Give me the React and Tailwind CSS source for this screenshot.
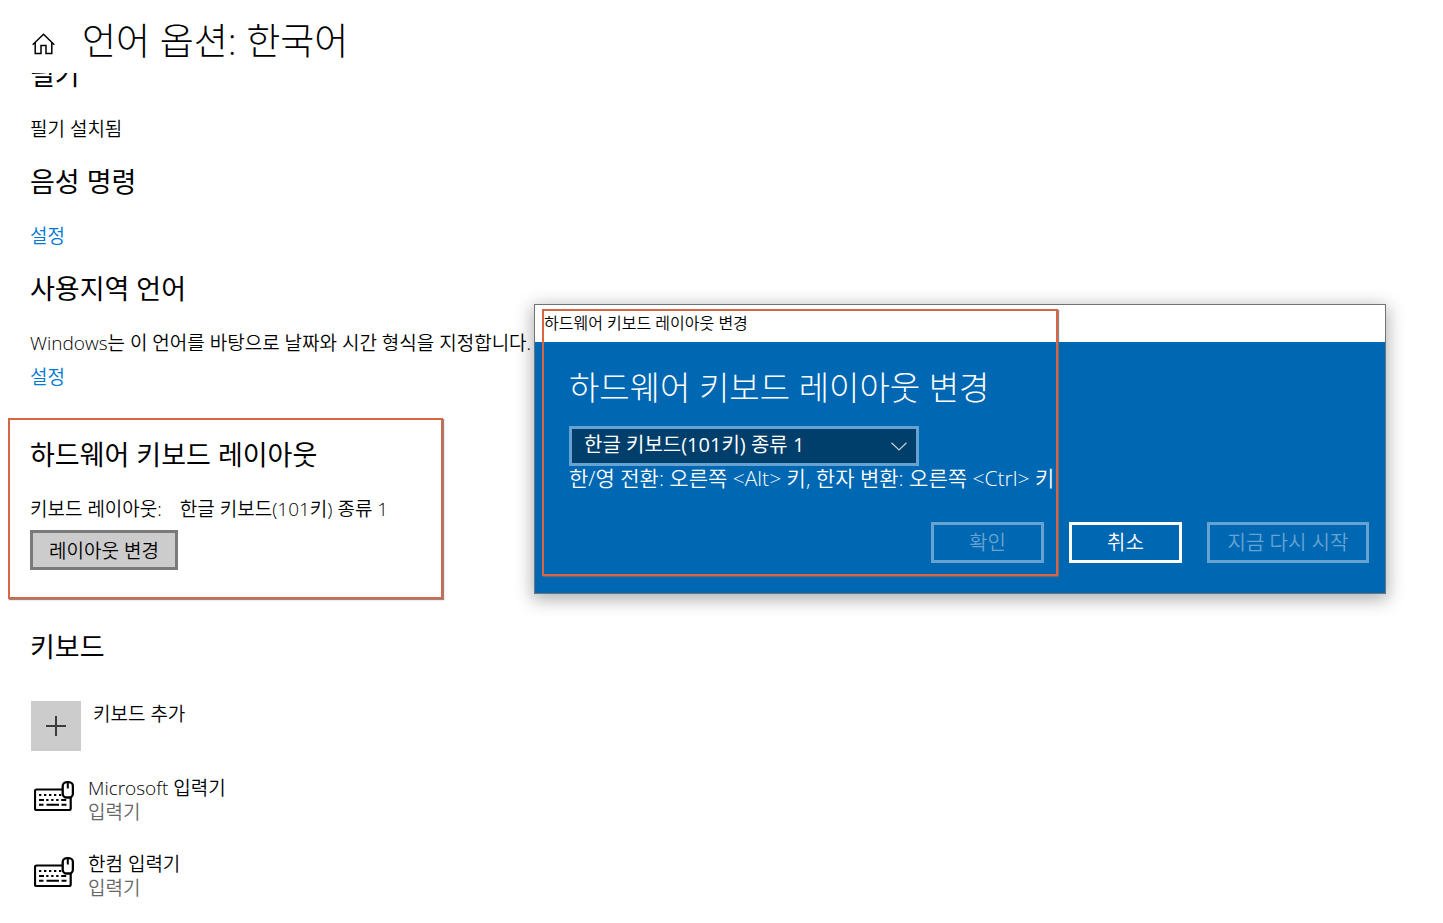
import React from "react";

const HomeIcon = () => (
  <svg width="24" height="22" viewBox="0 0 24 22" fill="none" stroke="black" strokeWidth="1.5" aria-hidden="true">
    <path d="M0.7 11.8 L11.5 1.2 L22.3 11.8" />
    <path d="M3.2 9.5 V20.6 H9 V12.5 H14 V20.6 H19.8 V9.5" />
  </svg>
);

const PlusIcon = () => (
  <svg width="20" height="20" viewBox="0 0 20 20" stroke="#3c3c3c" strokeWidth="2" aria-hidden="true">
    <path d="M10 0 V20 M0 10 H20" />
  </svg>
);

const ChevronIcon = () => (
  <svg
    className="pointer-events-none absolute right-3 top-4"
    width="16"
    height="9"
    viewBox="0 0 16 9"
    fill="none"
    stroke="#c3d3de"
    strokeWidth="1.2"
    aria-hidden="true"
  >
    <path d="M0.5 0.7 L8 8 L15.5 0.7" />
  </svg>
);

const KeyboardIcon = () => (
  <svg
    className="mt-[5px]"
    width="40"
    height="30"
    viewBox="0 0 40 30"
    fill="none"
    stroke="black"
    strokeWidth="2"
    aria-hidden="true"
  >
    <rect x="1" y="8.5" width="35.7" height="20.5" rx="1.5" strokeWidth="2.2" />
    <path d="M5 14 h2.3 M10 14 h2.3 M15 14 h2.3 M20 14 h2.3 M25 14 h2.3" />
    <path d="M5 19 h5 M12.2 19 h2.3 M17.2 19 h2.3 M22.2 19 h2.3 M27.2 19 h5" />
    <path d="M5 23.8 h4.5 M12.5 23.8 h12.5 M27.5 23.8 h5" />
    <rect x="28.7" y="1.2" width="10.2" height="15.3" rx="4" fill="white" strokeWidth="2.3" />
    <path d="M33.8 1 V7.5" />
  </svg>
);

const Heading = ({ children }) => (
  <h2 className="text-[27px] leading-9 font-normal whitespace-nowrap">{children}</h2>
);

const inputMethods = [
  { name: "Microsoft 입력기", kind: "입력기" },
  { name: "한컴 입력기", kind: "입력기" },
];

function LayoutDialog() {
  return (
    <div
      role="dialog"
      aria-labelledby="dialog-title"
      className="absolute left-[534px] right-[57px] top-[304px] min-w-[700px] border border-[#6f7479] bg-[#0067b3] text-white shadow-[0_4px_16px_2px_rgba(0,0,0,0.3)]"
    >
      <div className="h-[37px] bg-white pl-[9px] text-base leading-9 text-black">
        하드웨어 키보드 레이아웃 변경
      </div>
      <div className="pt-[22px] pr-4 pb-[30px] pl-[34px]">
        <h1 id="dialog-title" className="text-[33px] leading-[48px] font-light">
          하드웨어 키보드 레이아웃 변경
        </h1>
        <div className="relative mt-[14px] w-[350px]">
          <select
            aria-label="하드웨어 키보드 레이아웃"
            className="block h-10 w-full appearance-none border-[3px] border-[#66a3d1] bg-[#003e6b] px-3 pb-[2px] text-[20px] leading-6 font-normal text-white"
          >
            <option>한글 키보드(101키) 종류 1</option>
          </select>
          <ChevronIcon />
        </div>
        <p className="text-[21px] leading-6 whitespace-nowrap">
          한/영 전환: 오른쪽 &lt;Alt&gt; 키, 한자 변환: 오른쪽 &lt;Ctrl&gt; 키
        </p>
        <div className="mt-8 flex justify-end gap-[25px] text-[20px] leading-6">
          <button disabled className="h-[41px] w-[113px] border-[3px] border-[#66a3d1] text-[#66a3d1]">
            확인
          </button>
          <button className="h-[41px] w-[113px] border-[3px] border-white">취소</button>
          <button disabled className="h-[41px] w-[162px] border-[3px] border-[#66a3d1] text-[#66a3d1]">
            지금 다시 시작
          </button>
        </div>
      </div>
      <div className="pointer-events-none absolute top-1 left-[7px] h-[267px] w-[516px] border-2 border-[#d96545] shadow-[1px_1px_1px_0px_rgba(110,110,110,0.8)]" />
    </div>
  );
}

export default function App() {
  return (
    <div className="relative min-h-screen overflow-hidden bg-white font-['Open_Sans','Noto_Sans_CJK_KR',sans-serif] text-[19px] leading-6 font-[350] text-black">
      <header className="flex h-[73px] items-center pt-2 pl-8">
        <a href="#home" aria-label="홈" className="mt-[6px]">
          <HomeIcon />
        </a>
        <h1 className="ml-[26px] text-[37px] leading-[52px] font-light">언어 옵션: 한국어</h1>
      </header>

      <main className="overflow-hidden">
        <div className="-mt-4 flex flex-col gap-[23px] pl-[30px]">
          <section>
            <Heading>필기</Heading>
            <p className="mt-6">필기 설치됨</p>
          </section>
          <section>
            <Heading>음성 명령</Heading>
            <a href="#speech" className="mt-6 block text-[#0078d7]">
              설정
            </a>
          </section>
          <section>
            <Heading>사용지역 언어</Heading>
            <p className="mt-6">Windows는 이 언어를 바탕으로 날짜와 시간 형식을 지정합니다.</p>
            <a href="#region" className="mt-[10px] block text-[#0078d7]">
              설정
            </a>
          </section>
        </div>

        <section className="mt-[29px] ml-2 w-[435px] border-2 border-[#d96545] pt-[17px] pb-[27px] pl-5 shadow-[1px_1px_1px_0px_rgba(110,110,110,0.8)]">
          <Heading>하드웨어 키보드 레이아웃</Heading>
          <p className="mt-6 flex gap-[18px]">
            <span>키보드 레이아웃:</span>
            <span>한글 키보드(101키) 종류 1</span>
          </p>
          <button className="mt-[9px] block h-10 w-[148px] border-[3px] border-[#7a7a7a] bg-[#cccccc] pt-px">
            레이아웃 변경
          </button>
        </section>

        <section className="mt-[30px] pl-[30px]">
          <Heading>키보드</Heading>
          <button className="mt-9 flex items-start gap-3 pl-px text-left">
            <span className="flex size-[50px] items-center justify-center bg-[#cccccc]">
              <PlusIcon />
            </span>
            <span className="pt-px">키보드 추가</span>
          </button>
          <ul className="mt-[25px] flex flex-col gap-7 pl-1">
            {inputMethods.map((method) => (
              <li key={method.name} className="flex items-start gap-[14px]">
                <KeyboardIcon />
                <div>
                  <p>{method.name}</p>
                  <p className="text-[#666666]">{method.kind}</p>
                </div>
              </li>
            ))}
          </ul>
        </section>
      </main>

      <LayoutDialog />
    </div>
  );
}
